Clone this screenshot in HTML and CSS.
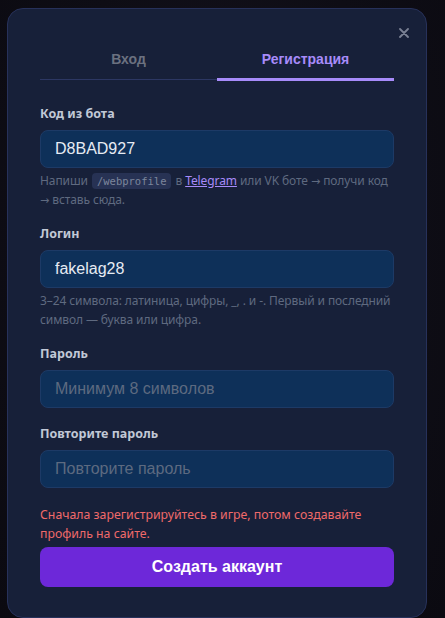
FILE: index.html
```html
<!DOCTYPE html>
<html lang="ru">
<head>
<meta charset="utf-8">
<title>Регистрация</title>
<link rel="stylesheet" href="styles.css">
</head>
<body>
<div class="modal">
  <button class="close" aria-label="Закрыть">
    <svg width="10" height="10" viewBox="0 0 10 10"><path d="M1 1L9 9M9 1L1 9" stroke="currentColor" stroke-width="1.8" stroke-linecap="round"/></svg>
  </button>
  <div class="tabs">
    <button class="tab">Вход</button>
    <button class="tab active">Регистрация</button>
  </div>
  <form class="form">
    <div class="field">
      <label class="label">Код из бота</label>
      <input class="input" type="text" value="D8BAD927">
      <p class="hint">Напиши <code class="code">/webprofile</code> в <a class="link" href="#">Telegram</a> или VK боте <span class="arrow">→</span> получи код <span class="arrow">→</span> вставь сюда.</p>
    </div>
    <div class="field">
      <label class="label">Логин</label>
      <input class="input" type="text" value="fakelag28">
      <p class="hint">3–24 символа: латиница, цифры, _, . и -. Первый и последний символ — буква или цифра.</p>
    </div>
    <div class="field">
      <label class="label">Пароль</label>
      <input class="input" type="password" placeholder="Минимум 8 символов">
    </div>
    <div class="field">
      <label class="label">Повторите пароль</label>
      <input class="input" type="password" placeholder="Повторите пароль">
    </div>
    <p class="error">Сначала зарегистрируйтесь в игре, потом создавайте профиль на сайте.</p>
    <button class="submit" type="button">Создать аккаунт</button>
  </form>
</div>
</body>
</html>
```
FILE: styles.css
```css
* { box-sizing: border-box; }
html, body { height: 100%; }
body {
  margin: 0;
  background: radial-gradient(ellipse at 50% 40%, #16131f 0%, #0e0d15 60%, #0b0a11 100%);
  font-family: "Noto Sans", "Open Sans", sans-serif;
  overflow: hidden;
}
.modal {
  position: relative;
  width: 420px;
  margin: 8px 0 0 7px;
  background: #172039;
  border: 1px solid #27315a;
  border-radius: 16px;
  padding: 31px 32px 30px;
}
.close {
  position: absolute;
  top: 18px;
  right: 16px;
  width: 12px;
  height: 12px;
  padding: 1px;
  border: 0;
  background: none;
  color: #7a8194;
  display: flex;
  align-items: center;
  justify-content: center;
}
.tabs {
  display: flex;
  border-bottom: 1px solid #2c3763;
  margin-bottom: 26px;
}
.tab {
  flex: 1;
  background: none;
  border: 0;
  border-bottom: 3px solid transparent;
  margin-bottom: -2px;
  padding: 11px 0 10px;
  font-family: "Liberation Sans", Arial, sans-serif;
  font-weight: bold;
  font-size: 14px;
  line-height: 17px;
  color: #6b7180;
}
.tab.active {
  color: #a78bfa;
  border-bottom-color: #a78bfa;
}
.form { display: flex; flex-direction: column; }
.field { display: flex; flex-direction: column; margin-bottom: 18px; }
.label {
  font-size: 12.5px;
  font-weight: 700;
  line-height: 16px;
  color: #c1c8d6;
  margin-bottom: 8px;
}
.input {
  height: 38px;
  width: 100%;
  background: #0e3059;
  border: 1px solid #1d3a66;
  border-radius: 8px;
  padding: 0 14px;
  font-family: "Liberation Sans", Arial, sans-serif;
  font-size: 16px;
  color: #e6ebf3;
  outline: none;
}
.input::placeholder { color: #5d6a80; }
.hint {
  margin: 4px 0 -1px;
  font-size: 12px;
  letter-spacing: -0.1px;
  line-height: 18.5px;
  color: #5f6a80;
}
.arrow {
  font-family: "DejaVu Sans", sans-serif;
  font-size: 11px;
  line-height: 10px;
  letter-spacing: 0;
}
.code {
  display: inline-block;
  margin: 0 1px;
  font-family: "DejaVu Sans Mono", "Liberation Mono", monospace;
  font-size: 10.5px;
  letter-spacing: 0;
  line-height: 16px;
  background: #273254;
  color: #7c869c;
  border-radius: 4px;
  padding: 0 5px;
}
.link { color: #a78bfa; text-decoration: underline; }
.error {
  margin: 0 0 4px;
  font-size: 12.3px;
  line-height: 18.5px;
  color: #f06a6a;
}
.submit {
  height: 40px;
  border: 0;
  border-radius: 8px;
  background: #6d28d9;
  color: #ffffff;
  font-family: "Liberation Sans", Arial, sans-serif;
  font-weight: bold;
  font-size: 16px;
}
```
